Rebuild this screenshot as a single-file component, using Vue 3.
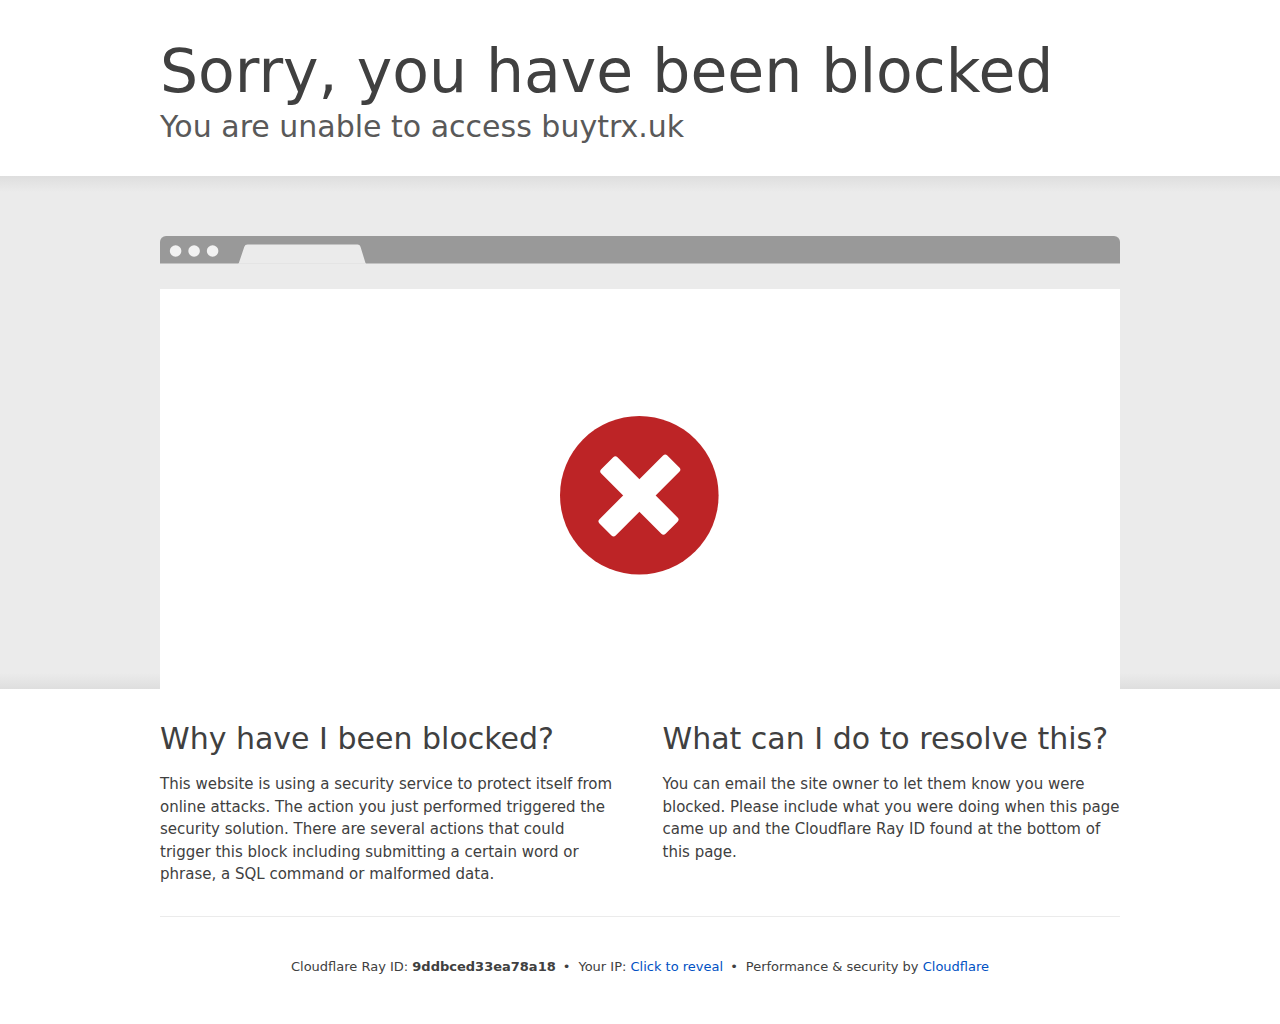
<script setup>
import { ref } from 'vue'

const ipShown = ref(false)
const rayId = '9ddbced33ea78a18'
</script>

<template>
  <div class="page">
    <header class="wrapper header">
      <h1>Sorry, you have been blocked</h1>
      <h2 class="subheadline">You are unable to access buytrx.uk</h2>
    </header>

    <section class="highlight">
      <div class="wrapper">
        <div class="browser">
          <div class="browser-bar">
            <svg class="browser-chrome" width="208" height="28" viewBox="0 0 208 28" aria-hidden="true">
              <g fill="#f2f2f2">
                <circle cx="15.6" cy="15" r="5.8" />
                <circle cx="34.1" cy="15" r="5.8" />
                <circle cx="52.6" cy="15" r="5.8" />
              </g>
              <path fill="#ebebeb" d="M78.5 28 84.3 10.8Q85 8.500 87.500 8.500H197.500Q199.800 8.500 200.500 10.8L205.800 28Z" />
              <path fill="#e4e4e4" d="M79 27H205.500V28H78.500Z" />
            </svg>
          </div>
          <div class="screen">
            <svg class="error-icon" width="160" height="160" viewBox="0 0 160 160" role="img" aria-label="Blocked">
              <circle cx="79.300" cy="79.300" r="79.300" fill="#bd2426" />
              <g fill="#fff" transform="translate(79.400 79.500)">
                <rect x="-45.500" y="-11.500" width="91" height="23" rx="3" transform="rotate(45)" />
                <rect x="-48" y="-11.500" width="96" height="23" rx="3" transform="rotate(-45)" />
              </g>
            </svg>
          </div>
        </div>
      </div>
    </section>

    <main class="wrapper columns">
      <section>
        <h2>Why have I been blocked?</h2>
        <p>This website is using a security service to protect itself from online attacks. The action you just performed triggered the security solution. There are several actions that could trigger this block including submitting a certain word or phrase, a SQL command or malformed data.</p>
      </section>
      <section>
        <h2>What can I do to resolve this?</h2>
        <p>You can email the site owner to let them know you were blocked. Please include what you were doing when this page came up and the Cloudflare Ray ID found at the bottom of this page.</p>
      </section>
    </main>

    <footer class="wrapper footer">
      <p>
        <span>Cloudflare Ray ID: <strong>{{ rayId }}</strong></span>
        <span class="separator">•</span>
        <span>Your IP: <button v-if="!ipShown" type="button" @click="ipShown = true">Click to reveal</button><span v-else>203.0.113.7</span></span>
        <span class="separator">•</span>
        <span>Performance &amp; security by <a href="https://www.cloudflare.com/">Cloudflare</a></span>
      </p>
    </footer>
  </div>
</template>

<style>
body {
  margin: 0;
  background: #fff;
}
</style>

<style scoped>
.page {
  color: #404040;
  font-family: "DejaVu Sans", sans-serif;
  font-size: 15px;
  line-height: 1.5;
}

.wrapper {
  width: 75%;
  max-width: 1200px;
  margin: 0 auto;
}

.header {
  padding: 35px 0 30px;
}

h1,
h2 {
  margin: 0;
  font-weight: 400;
}

h1 {
  font-size: 60px;
  line-height: 72px;
}

h2 {
  font-size: 30px;
  line-height: 39px;
}

.subheadline {
  color: #595959;
}

.highlight {
  padding-top: 60px;
  background-color: #ebebeb;
  background-image:
    linear-gradient(to bottom, #dedede, #ebebeb),
    linear-gradient(to top, #dedede, #ebebeb);
  background-position: top, bottom;
  background-repeat: no-repeat;
  background-size: 100% 16px;
}

.browser-bar {
  height: 28px;
  overflow: hidden;
  border-radius: 6px 6px 0 0;
  background: linear-gradient(#999 27px, #c2c2c2 27px);
}

.browser-chrome {
  display: block;
}

.screen {
  display: flex;
  justify-content: center;
  margin-top: 25px;
  padding: 127px 0 113px;
  background: #fff;
}

.error-icon {
  display: block;
}

.columns {
  display: grid;
  grid-template-columns: 1fr 1fr;
  gap: 45px;
  padding: 30px 0;
}

.columns p {
  margin: 15px 0 0;
}

.footer {
  box-sizing: border-box;
  padding: 40px 0;
  border-top: 1px solid #ebebeb;
  font-size: 13px;
  line-height: 20px;
  text-align: center;
}

.footer p {
  margin: 0;
}

.separator {
  margin: 0 8px 0 7px;
}

a,
button {
  color: #0051c3;
  text-decoration: none;
}

button {
  padding: 0;
  border: 0;
  background: none;
  font: inherit;
  cursor: pointer;
}
</style>
